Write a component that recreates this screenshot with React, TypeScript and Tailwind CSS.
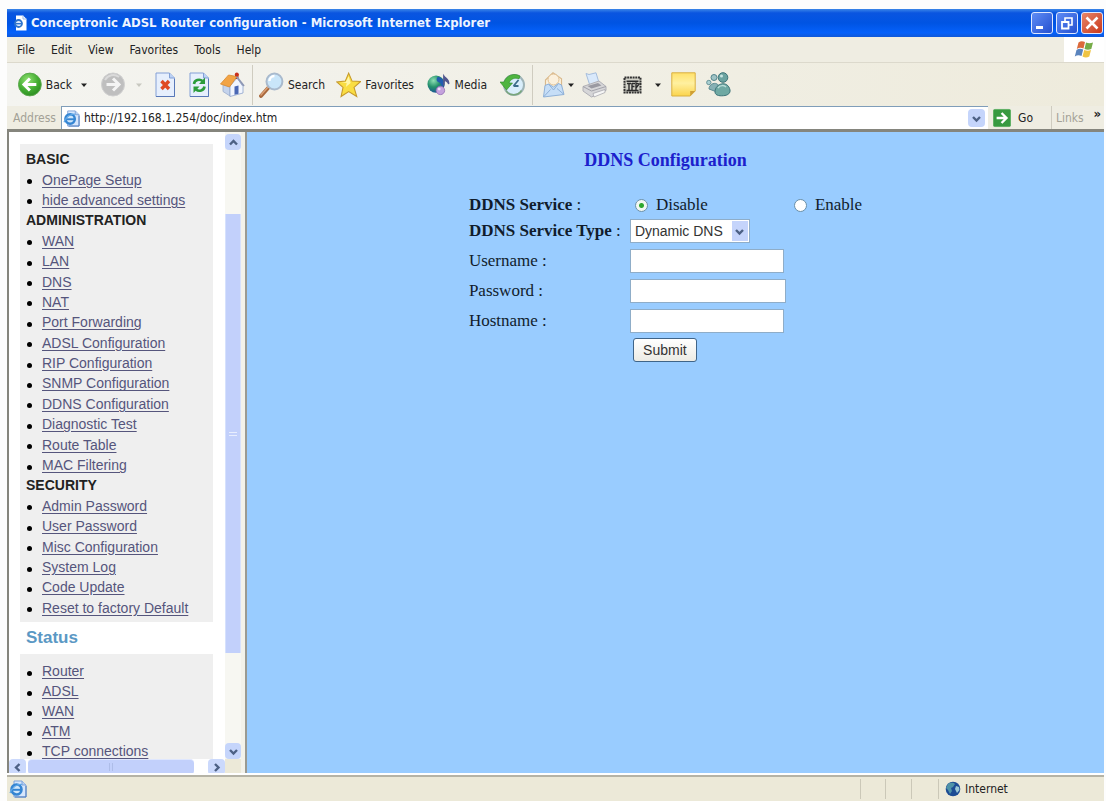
import type { ReactNode } from 'react'

const ui = "font-['DejaVu_Sans_Condensed','DejaVu_Sans',sans-serif]"

function Caret({ muted = false }: { muted?: boolean }) {
  return (
    <svg viewBox="0 0 8 8" className={muted ? 'h-2 w-2 text-[#c8c8c0]' : 'h-2 w-2 text-[#222]'} fill="currentColor" aria-hidden="true">
      <path d="M1 2.5h6L4 6z" />
    </svg>
  )
}

function Chevron({ dir }: { dir: 'up' | 'down' | 'left' | 'right' }) {
  const paths = {
    up: 'M2 7.5 5.5 4 9 7.5',
    down: 'M2 4 5.5 7.5 9 4',
    left: 'M7.5 2 4 5.5 7.5 9',
    right: 'M4 2 7.5 5.5 4 9',
  }
  return (
    <svg viewBox="0 0 11 11" className="size-[11px]" fill="none" stroke="#4d6185" strokeWidth="2.4" aria-hidden="true">
      <path d={paths[dir]} />
    </svg>
  )
}

function IePage({ className }: { className: string }) {
  return (
    <svg viewBox="0 0 18 18" className={className} fill="none" aria-hidden="true">
      <path d="M5 1h8l4 4v12H5z" fill="#d6e6fc" stroke="#7fa3d8" />
      <path d="M13 1v4h4" fill="#b9d1f2" stroke="#7fa3d8" />
      <path d="M17 6v11H6" stroke="#4f7cc0" />
      <circle cx="7.500" cy="9.500" r="5" fill="#cfe6fb" stroke="#3585d2" strokeWidth="2.600" />
      <path d="M3.500 9.800h8.600" stroke="#3585d2" strokeWidth="2" />
      <path d="M1 13C3 7 9 3.500 13 4.500" stroke="#5da7e8" strokeWidth="1.200" />
    </svg>
  )
}

function BackIcon() {
  return (
    <svg viewBox="0 0 24 25" className="h-[25px] w-6" aria-hidden="true">
      <defs>
        <radialGradient id="backFill" cx=".4" cy=".3" r=".75">
          <stop offset="0" stopColor="#8fe070" />
          <stop offset=".6" stopColor="#43ad32" />
          <stop offset="1" stopColor="#2b8a20" />
        </radialGradient>
      </defs>
      <circle cx="12" cy="12.500" r="11.500" fill="url(#backFill)" stroke="#5aa84c" />
      <path d="M12 6.500 6 12.500l6 6M6.500 12.500h12" fill="none" stroke="#fff" strokeWidth="3" />
    </svg>
  )
}

function ForwardIcon() {
  return (
    <svg viewBox="0 0 24 25" className="h-[25px] w-6" aria-hidden="true">
      <circle cx="12" cy="12.500" r="11.500" fill="#bfbfbf" stroke="#d0d0d0" />
      <path d="M4 8a9.500 9.500 0 0 1 14-3" fill="none" stroke="#dadada" strokeWidth="2" />
      <path d="M12 6.500l6 6-6 6M17.500 12.500h-12" fill="none" stroke="#f4f4f4" strokeWidth="3" />
    </svg>
  )
}

function PageShape() {
  return (
    <>
      <path d="M1 1h13.500L19.500 6v18.500H1z" fill="#e6effd" stroke="#83a0d6" />
      <path d="M14.500 1v5h5" fill="#bcd2f5" stroke="#83a0d6" />
      <path d="M1 24.500h18.500V7" fill="none" stroke="#5878b8" />
    </>
  )
}

function StopIcon() {
  return (
    <svg viewBox="0 0 20 25" className="h-[25px] w-5" aria-hidden="true">
      <PageShape />
      <path d="M6.500 9l7.500 8M14 9l-7.500 8" stroke="#df4a24" strokeWidth="3.400" />
    </svg>
  )
}

function RefreshIcon() {
  return (
    <svg viewBox="0 0 20 25" className="h-[25px] w-5" aria-hidden="true">
      <PageShape />
      <path d="M5 12c.5-4 5.500-5.500 8.500-3" fill="none" stroke="#2a9c3a" strokeWidth="2.600" />
      <path d="M16 5.500v6.500h-6z" fill="#2a9c3a" />
      <path d="M15.500 14.500c-.5 4-5.500 5.500-8.500 3" fill="none" stroke="#2a9c3a" strokeWidth="2.600" />
      <path d="M4.500 21v-6.500h6z" fill="#2a9c3a" />
    </svg>
  )
}

function HomeIcon() {
  return (
    <svg viewBox="0 0 25 25" className="size-[25px]" aria-hidden="true">
      <path d="M3 12.500 10 15v9l-7-4.500z" fill="#c4d3ec" stroke="#9aaccc" strokeWidth=".8" />
      <path d="M10 14l7-8 6 8.500V21l-13 3.500z" fill="#f1f5fd" stroke="#8ea3cc" strokeWidth=".8" />
      <path d="M15 2h3.500v5H15z" fill="#b8341c" />
      <path d="M.5 12 8.500 3 17 4.500 9.500 15z" fill="#f2a445" stroke="#d98a30" strokeWidth=".8" />
      <path d="M16.500 4.500 24 14" stroke="#8d97b4" strokeWidth="1.800" />
      <path d="M14.500 14.500l4-1v8.300l-4 1z" fill="#4a67b4" />
      <circle cx="16.800" cy="2.500" r="2" fill="#c9301b" />
    </svg>
  )
}

function SearchIcon() {
  return (
    <svg viewBox="0 0 25 26" className="h-[26px] w-[25px]" aria-hidden="true">
      <path d="M10 15 2 24" stroke="#a8683c" strokeWidth="3.800" strokeLinecap="round" />
      <path d="M9.500 14.500 2 23" stroke="#dba076" strokeWidth="1.500" strokeLinecap="round" />
      <circle cx="15.500" cy="9.500" r="8" fill="#c9e6fa" stroke="#a9bacd" strokeWidth="2" />
      <path d="M10.500 9a5 5 0 0 1 5-5" fill="none" stroke="#fff" strokeWidth="2.400" />
    </svg>
  )
}

function StarIcon() {
  return (
    <svg viewBox="0 0 26 26" className="size-[26px]" aria-hidden="true">
      <path d="M13 .8l3.500 8.200 8.800.4-6.800 6 2.800 9.400-8.300-5-7.800 5 2-9.400L.8 9.800l8.700-.8z" fill="#f9dd42" stroke="#c69a2c" strokeWidth="1.100" />
      <path d="M13 4l2 7-5 4-1 5 2-9-6-.5 5-.5z" fill="#fff6a8" />
    </svg>
  )
}

function MediaIcon() {
  return (
    <svg viewBox="0 0 26 25" className="h-[25px] w-[26px]" aria-hidden="true">
      <defs>
        <radialGradient id="mediaFill" cx=".35" cy=".3" r=".75">
          <stop offset="0" stopColor="#8fe0b4" />
          <stop offset=".5" stopColor="#26926c" />
          <stop offset="1" stopColor="#184f97" />
        </radialGradient>
      </defs>
      <circle cx="10" cy="12" r="9.500" fill="url(#mediaFill)" />
      <path d="M12 4c5 1 7 5 6 11-3-1-2-4-5-5s-3-4-1-6z" fill="#225bb0" />
      <path d="M18.500 14V3c2 3 6 3 5.500 9-1-3-3-3.500-4-4" fill="#53578f" stroke="#53578f" strokeWidth="1.400" />
      <circle cx="14.800" cy="19" r="4.700" fill="#c5a2dd" stroke="#8d6ab0" strokeWidth=".8" />
      <circle cx="13.500" cy="17.500" r="1.500" fill="#efdcf8" />
    </svg>
  )
}

function HistoryIcon() {
  return (
    <svg viewBox="0 0 25 24" className="h-6 w-[25px]" aria-hidden="true">
      <circle cx="14" cy="12" r="10" fill="#d9eefb" stroke="#9fb4b8" strokeWidth="2" />
      <path d="M20 3A11 11 0 0 0 4 9H0l6.500 8 6-7H9c1.500-4 6-6 10-4z" fill="#4fb540" stroke="#2f8a29" strokeWidth=".6" />
      <path d="M13.500 13 18.500 7M13.500 13h5" stroke="#3c6d8a" strokeWidth="1.800" />
      <path d="M6 17.500c3 6 12 5.500 15.500 0" fill="none" stroke="#78a67a" strokeWidth="1.500" />
    </svg>
  )
}

function MailIcon() {
  return (
    <svg viewBox="0 0 24 26" className="h-[26px] w-6" aria-hidden="true">
      <path d="M4.500 8 12 .8l8.500 6v9h-16z" fill="#fdf3e0" stroke="#d9b98c" strokeWidth="1.200" />
      <circle cx="12.500" cy="7.500" r="5.500" fill="#fbf0dd" stroke="#dfbf92" />
      <path d="M4 13.500 7.500 12l5 3 5-3.500 3 1.500 2.500 9.500L2.500 25z" fill="#c6def7" stroke="#8fb1d8" />
      <path d="M7.500 12l5 6 5-6.500M2.500 25l7-7.500M23 22.500l-7-6" fill="none" stroke="#8fb1d8" />
    </svg>
  )
}

function PrinterIcon() {
  return (
    <svg viewBox="0 0 25 26" className="h-[26px] w-[25px]" aria-hidden="true">
      <path d="M4 1.500 7 2.500 14 .8l3 10-9 3z" fill="#d9e9fb" stroke="#a5bddc" />
      <path d="M1 14.500 17 9l7 5.500v4L9.500 25 1 19z" fill="#d6d6d8" stroke="#b0b0b6" />
      <path d="M1 14.500 9.500 19 24 14.500" fill="none" stroke="#a2a2aa" />
      <path d="M5.500 14 16 11l3.500 2.500-10 3z" fill="#9a9aa2" />
      <path d="M11 21.500 23 17.500v3l-11 4.500z" fill="#f6f6f6" stroke="#a0a0a8" strokeWidth=".7" />
    </svg>
  )
}

function BadgeIcon() {
  return (
    <svg viewBox="0 0 19 18" className="h-[18px] w-[19px]" aria-hidden="true">
      <path d="M1.500 1.500h16v15h-16z" fill="#d2d2c8" stroke="#333" strokeWidth="2" strokeDasharray="2 .7" />
      <path d="M3.500 5.200h12M4 7.500h4M6 7.500V14M9 7v7M9 7.500h3M9 10.500h2.500M13 14V7l3 1-3 4M3.500 14.500h12" fill="none" stroke="#2c2c2c" strokeWidth="1.400" />
    </svg>
  )
}

function NoteIcon() {
  return (
    <svg viewBox="0 0 25 25" className="size-[25px]" aria-hidden="true">
      <defs>
        <linearGradient id="noteFill" x1="0" y1="0" x2="0" y2="1">
          <stop offset="0" stopColor="#ffe16a" />
          <stop offset=".45" stopColor="#fff0a0" />
          <stop offset="1" stopColor="#fbd44c" />
        </linearGradient>
      </defs>
      <path d="M.8.800h23.400V19l-5 5H.8z" fill="url(#noteFill)" stroke="#d9b040" />
      <path d="M24.200 19h-5v5z" fill="#cf9f35" />
    </svg>
  )
}

function MessengerIcon() {
  return (
    <svg viewBox="0 0 25 25" className="size-[25px]" aria-hidden="true">
      <circle cx="8" cy="5.500" r="3" fill="#9fc3c5" stroke="#54858c" />
      <circle cx="2.800" cy="10.500" r="2.200" fill="#a9cfd2" stroke="#54858c" strokeWidth=".8" />
      <path d="M3 17c0-6 9-8 10-2l-2 5z" fill="#86b0b4" stroke="#5b8b92" />
      <circle cx="17" cy="5.500" r="4.800" fill="#6ba3a0" stroke="#3d7478" />
      <circle cx="15.500" cy="4" r="1.500" fill="#c8e5e2" />
      <path d="M9 20c0-9 13-12 15-2 .5 3-2 5-5 5.500-4 .7-10 .5-10-3.500z" fill="#6fa9a3" stroke="#3d7478" />
      <path d="M12 16c2-3 6-3 8-1" fill="none" stroke="#b9ddd8" strokeWidth="1.500" />
    </svg>
  )
}

function GoIcon() {
  return (
    <svg viewBox="0 0 20 20" className="size-5" aria-hidden="true">
      <rect x=".5" y=".5" width="19" height="19" rx="1.500" fill="#379a40" stroke="#5aae60" />
      <path d="M4 10h10.500M9.500 4.500 15 10l-5.500 5.500" fill="none" stroke="#fff" strokeWidth="2.600" />
    </svg>
  )
}

function WindowsFlag() {
  return (
    <svg viewBox="0 0 20 19" className="h-[19px] w-5" aria-hidden="true">
      <path d="M4.500 2.500C6.500.8 8.500.8 11 2L9.500 8.500C7 7.500 5 7.500 2.800 9z" fill="#dc6a3b" />
      <path d="M12 2.500c2.500 1 4.500 1 7 0L17.300 9c-2.300 1-4.300 1-6.800 0z" fill="#76ac48" />
      <path d="M2.500 10C4.500 8.500 6.800 8.500 9.200 9.500L7.500 16C5.200 15 3 15 .8 16.500z" fill="#5a84bd" />
      <path d="M10.200 10c2.500 1 4.500 1 6.800 0l-1.700 6.500c-2.300 1.200-4.500 1.200-6.800 0z" fill="#efc444" />
    </svg>
  )
}

function Globe() {
  return (
    <svg viewBox="0 0 16 16" className="size-4" aria-hidden="true">
      <circle cx="8" cy="8" r="7.300" fill="#1d4c94" />
      <path d="M3 3c3-2 6-1 7 0L8 6 6 7l1 3-2 3-2-4-2-2z" fill="#4f93a8" />
      <path d="M11 5l3 1 .5 3-2.500 3-2-4z" fill="#9bc7d6" />
    </svg>
  )
}

function ToolButton({ icon, label, className = '' }: { icon: ReactNode; label?: string; className?: string }) {
  return (
    <button type="button" className={`flex shrink-0 items-center gap-1 whitespace-nowrap text-left ${className}`}>
      {icon}
      {label && <span>{label}</span>}
    </button>
  )
}

function CaptionButton({ label, className, children }: { label: string; className: string; children: ReactNode }) {
  return (
    <button type="button" aria-label={label} className={`flex size-[22px] items-center justify-center rounded-[3px] border border-[#dfe8ff] ${className}`}>
      <svg viewBox="0 0 20 20" className="size-5" fill="none" stroke="#fff" aria-hidden="true">
        {children}
      </svg>
    </button>
  )
}

const groups = [
  { title: 'BASIC', items: ['OnePage Setup', 'hide advanced settings'] },
  {
    title: 'ADMINISTRATION',
    items: [
      'WAN', 'LAN', 'DNS', 'NAT', 'Port Forwarding', 'ADSL Configuration', 'RIP Configuration',
      'SNMP Configuration', 'DDNS Configuration', 'Diagnostic Test', 'Route Table', 'MAC Filtering',
    ],
  },
  {
    title: 'SECURITY',
    items: ['Admin Password', 'User Password', 'Misc Configuration', 'System Log', 'Code Update', 'Reset to factory Default'],
  },
]

const statusItems = ['Router', 'ADSL', 'WAN', 'ATM', 'TCP connections']

function NavItem({ label }: { label: string }) {
  return (
    <li className="flex items-center gap-[10px] pl-px">
      <span className="mt-1 size-[5px] rounded-full bg-black" />
      <a href="#" className="whitespace-nowrap text-[#55557c] underline underline-offset-2">
        {label}
      </a>
    </li>
  )
}

function Sidebar() {
  return (
    <nav className="flex min-h-0 w-[234px] shrink-0 flex-col border-l-2 border-[#85857d] bg-white font-['Liberation_Sans',Arial,sans-serif] text-sm leading-5">
      <div className="flex min-h-0 flex-1">
        <div className="min-w-0 flex-1 overflow-hidden pt-3 pr-3 pl-[11px]">
          <div className="grid h-[478px] auto-rows-fr bg-[#efefef] pt-[5px] pb-1 pl-[6px]">
            {groups.map((g) => (
              <section key={g.title} className="contents">
                <h2 className="flex items-center font-bold text-[#222]">{g.title}</h2>
                <ul className="contents">
                  {g.items.map((i) => (
                    <NavItem key={i} label={i} />
                  ))}
                </ul>
              </section>
            ))}
          </div>
          <h2 className="py-1 pl-[6px] text-[17px] leading-6 font-bold text-[#5b98c4]">Status</h2>
          <ul className="bg-[#efefef] pt-[7px] pl-[6px]">
            {statusItems.map((i) => (
              <NavItem key={i} label={i} />
            ))}
          </ul>
        </div>
        <div className="flex w-4 shrink-0 flex-col bg-[#f7f7f2]">
          <button type="button" aria-label="Scroll up" className="mt-0.5 flex h-4 items-center justify-center rounded-sm bg-[#c5d5fb]">
            <Chevron dir="up" />
          </button>
          <div className="flex min-h-0 flex-1 flex-col pt-16 pb-[90px]">
            <div className="flex flex-1 items-center justify-center border-x border-[#d6e1fd] bg-[#c2d0fb]">
              <span className="h-1 w-2 border-y border-[#e8eefe]" />
            </div>
          </div>
          <button type="button" aria-label="Scroll down" className="flex h-4 items-center justify-center rounded-sm bg-[#c5d5fb]">
            <Chevron dir="down" />
          </button>
        </div>
      </div>
      <div className="flex h-4 shrink-0">
        <button type="button" aria-label="Scroll left" className="flex w-[17px] items-center justify-center rounded-sm bg-[#cbd9fc]">
          <Chevron dir="left" />
        </button>
        <div className="mx-0.5 flex flex-1 pr-3">
          <div className="flex flex-1 items-center justify-center rounded-sm border-y border-[#dfe7fe] bg-[#c2d0fb]">
            <span className="h-2 w-1 border-x border-[#aebde8]" />
          </div>
        </div>
        <button type="button" aria-label="Scroll right" className="flex w-[17px] items-center justify-center rounded-sm bg-[#cbd9fc]">
          <Chevron dir="right" />
        </button>
        <div className="w-4 bg-[#ece9d8]" />
      </div>
    </nav>
  )
}

const radio =
  'size-[13px] shrink-0 appearance-none rounded-full border border-[#6a8fa8] bg-white checked:bg-[radial-gradient(circle,#2fa82f_0_2px,#f2f8f2_3px)]'
const field = "block h-6 border border-[#8fadc8] bg-white px-1 font-['Liberation_Sans',Arial,sans-serif] text-sm"

function DdnsForm() {
  return (
    <main className="min-w-0 flex-1 overflow-hidden bg-[#99ccff] pt-4 pr-5 font-['Liberation_Serif','Times_New_Roman',serif] text-[17px] leading-6 text-[#111c2c]">
      <h1 className="text-center text-lg leading-6 font-bold text-[#1c20cc]">DDNS Configuration</h1>
      <form className="mx-auto mt-5 w-fit" onSubmit={(e) => e.preventDefault()}>
        <div role="radiogroup" aria-labelledby="service" className="flex h-[26px] items-center">
          <span id="service" className="w-[161px] whitespace-nowrap"><b>DDNS Service</b> :</span>
          <label className="flex w-[159px] items-center gap-2 pl-[5px]">
            <input type="radio" name="ddns" defaultChecked className={radio} />
            Disable
          </label>
          <label className="flex items-center gap-2 pl-[5px]">
            <input type="radio" name="ddns" className={radio} />
            Enable
          </label>
        </div>
        <div className="flex h-[26px] items-center">
          <label htmlFor="type" className="w-[161px] shrink-0 whitespace-nowrap"><b>DDNS Service Type</b> :</label>
          <div className="relative">
            <select id="type" className="block h-6 w-[120px] appearance-none border border-[#8fadc8] bg-white pr-5 pl-1 font-['Liberation_Sans',Arial,sans-serif] text-sm leading-5 text-[#333]">
              <option>Dynamic DNS</option>
            </select>
            <span className="pointer-events-none absolute inset-y-0.5 right-0.5 flex w-4 items-center justify-center bg-[#c5d4fb]">
              <Chevron dir="down" />
            </span>
          </div>
        </div>
        <div className="mt-0.5 flex h-[30px] items-center">
          <label htmlFor="user" className="w-[161px]">Username :</label>
          <input id="user" type="text" className={`${field} w-[154px]`} />
        </div>
        <div className="flex h-[30px] items-center">
          <label htmlFor="pass" className="w-[161px]">Password :</label>
          <input id="pass" type="password" className={`${field} w-[156px]`} />
        </div>
        <div className="flex h-[30px] items-center">
          <label htmlFor="host" className="w-[161px]">Hostname :</label>
          <input id="host" type="text" className={`${field} w-[154px]`} />
        </div>
        <button type="submit" className="mt-[2px] ml-[164px] block h-6 w-16 rounded-[3px] border border-[#3f6488] bg-[linear-gradient(#fff,#ecebe4)] font-['Liberation_Sans',Arial,sans-serif] text-sm leading-5 text-[#333]">
          Submit
        </button>
      </form>
    </main>
  )
}

export default function App() {
  return (
    <div className="h-screen bg-[#fdfdfd] pt-[9px] pr-0.5 pl-[7px]">
      <div className={`flex h-full flex-col overflow-hidden bg-[#efede2] text-xs leading-4 text-[#222] ${ui}`}>
        <header className="flex h-7 shrink-0 items-center bg-[linear-gradient(#3b86e8_0,#0a55e0_14%,#0054e3_50%,#0561fb_85%,#1058d8)] pr-px pl-[6px]">
          <svg viewBox="0 0 14 16" className="h-4 w-[14px]" fill="none" aria-hidden="true">
            <path d="M3 .5h7L13.500 4v11.500H3z" fill="#fff" />
            <path d="M10 .5V4h3.500" stroke="#9bb8e8" />
            <circle cx="5.500" cy="8.500" r="3.500" fill="#dceafd" stroke="#2f74cc" strokeWidth="1.800" />
            <path d="M2.500 8.700h6" stroke="#2f74cc" strokeWidth="1.400" />
          </svg>
          <h1 className="ml-1 min-w-0 flex-1 truncate text-[13px] leading-5 font-bold text-[#eef4ff]">
            Conceptronic ADSL Router configuration - Microsoft Internet Explorer
          </h1>
          <div className="flex gap-[3px]">
            <CaptionButton label="Minimize" className="bg-[linear-gradient(135deg,#5f8cf5,#2450d0)]">
              <path d="M4 14.500h7" strokeWidth="3" />
            </CaptionButton>
            <CaptionButton label="Restore" className="bg-[linear-gradient(135deg,#5f8cf5,#2450d0)]">
              <path d="M8 8V5h7v7h-3" strokeWidth="1.600" />
              <path d="M5 9h6.500v6.500H5z" strokeWidth="1.800" />
            </CaptionButton>
            <CaptionButton label="Close" className="bg-[linear-gradient(135deg,#e8866a,#c9381a)]">
              <path d="M4.500 4.500l11 11M15.500 4.500l-11 11" strokeWidth="2.600" />
            </CaptionButton>
          </div>
        </header>

        <div className="flex h-[26px] shrink-0 items-center border-b border-[#dcd9cc]">
          <div className="flex flex-1 gap-4 pl-[10px]">
            {['File', 'Edit', 'View', 'Favorites', 'Tools', 'Help'].map((m) => (
              <button key={m} type="button">{m}</button>
            ))}
          </div>
          <div className="flex h-full w-10 items-center justify-center bg-white">
            <WindowsFlag />
          </div>
        </div>

        <div className="flex h-[43px] shrink-0 items-center overflow-hidden bg-[linear-gradient(90deg,#f4f4f0,#eeebdc)] pl-[11px]">
          <ToolButton icon={<BackIcon />} label="Back" className="w-[54px]" />
          <ToolButton icon={<Caret />} className="ml-2 w-[9px]" />
          <ToolButton icon={<ForwardIcon />} className="ml-3" />
          <ToolButton icon={<Caret muted />} className="ml-[10px]" />
          <ToolButton icon={<StopIcon />} className="ml-3" />
          <ToolButton icon={<RefreshIcon />} className="ml-[14px]" />
          <ToolButton icon={<HomeIcon />} className="ml-[11px]" />
          <span className="ml-[7px] h-10 w-px bg-[#cfccc0]" />
          <ToolButton icon={<SearchIcon />} label="Search" className="ml-[6px] w-[66px]" />
          <ToolButton icon={<StarIcon />} label="Favorites" className="ml-[11px] w-[78px]" />
          <ToolButton icon={<MediaIcon />} label="Media" className="ml-[13px] w-[60px]" />
          <ToolButton icon={<HistoryIcon />} className="ml-[13px]" />
          <span className="ml-[7px] h-10 w-px bg-[#cfccc0]" />
          <ToolButton icon={<MailIcon />} className="ml-2" />
          <ToolButton icon={<Caret />} className="ml-[2px]" />
          <ToolButton icon={<PrinterIcon />} className="ml-[7px]" />
          <ToolButton icon={<BadgeIcon />} className="ml-4" />
          <ToolButton icon={<Caret />} className="ml-3" />
          <ToolButton icon={<NoteIcon />} className="ml-[9px]" />
          <ToolButton icon={<MessengerIcon />} className="ml-[10px]" />
        </div>

        <div className="flex h-[23px] shrink-0 items-center">
          <label htmlFor="address" className="w-[54px] shrink-0 pl-[6px] text-[#a3a196]">Address</label>
          <div className="flex h-full min-w-0 flex-1 items-center border-t border-l border-[#7f9db9] bg-white pr-[3px] pl-px">
            <IePage className="size-[17px] shrink-0" />
            <input id="address" type="text" defaultValue="http://192.168.1.254/doc/index.htm" className="ml-1 min-w-0 flex-1 bg-transparent outline-none" />
            <button type="button" aria-label="Show addresses" className="flex h-[18px] w-[17px] items-center justify-center rounded-sm bg-[#c5d5fb]">
              <Chevron dir="down" />
            </button>
          </div>
          <button type="button" className="ml-[5px] flex w-10 items-center gap-[7px]">
            <GoIcon />
            Go
          </button>
          <div className="ml-[18px] flex h-full w-[53px] shrink-0 items-center border-l border-[#cfccc0] pl-1">
            <span className="flex-1 text-[#a3a196]">Links</span>
            <button type="button" aria-label="More links" className="mr-[3px] -mt-2 text-[13px] leading-4 font-bold">»</button>
          </div>
        </div>

        <div className="flex min-h-0 flex-1 border-t-[3px] border-[#85857d] bg-[#f3f2ea]">
          <Sidebar />
          <div className="w-[6px] shrink-0 border-r-2 border-[#9a9a92]" />
          <DdnsForm />
        </div>

        <footer className="flex h-[26px] shrink-0 items-center border-t-2 border-[#b5b3a6] bg-[#ece9d8] pl-[2px] ring-2 ring-white">
          <IePage className="size-[18px]" />
          <div className="flex h-5 flex-1 justify-end">
            <span className="w-[25px] border-l border-[#cbc8b8]" />
            <span className="w-[26px] border-l border-[#cbc8b8]" />
            <span className="w-[27px] border-l border-[#cbc8b8]" />
          </div>
          <div className="flex h-5 w-[166px] items-center gap-1 border-l border-[#cbc8b8] pl-[6px]">
            <Globe />
            Internet
          </div>
        </footer>
      </div>
    </div>
  )
}
